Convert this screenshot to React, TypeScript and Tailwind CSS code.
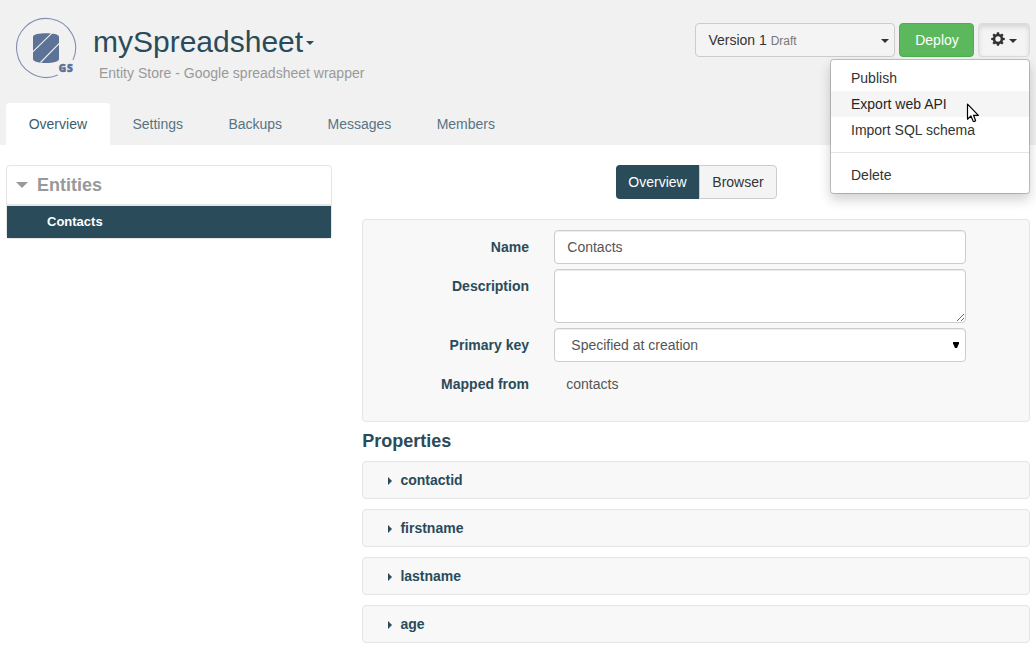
import React from 'react';

const tabs = ['Overview', 'Settings', 'Backups', 'Messages', 'Members'];
const properties = ['contactid', 'firstname', 'lastname', 'age'];
const toothAngles = [0, 45, 90, 135];

function Caret({ className = '' }: { className?: string }) {
  return (
    <span
      className={`inline-block h-0 w-0 shrink-0 border-x-4 border-t-4 border-x-transparent border-t-current ${className}`}
    />
  );
}

function Logo() {
  return (
    <svg width="62" height="62" viewBox="0 0 62 62" className="shrink-0">
      <path d="M58 43 A29.5 29.5 0 1 0 42.8 58" fill="none" stroke="#8090b4" strokeWidth="1.1" />
      <path d="M18 19.5 C18 15 44 15 44 19.5 V42 C44 47.3 18 47.3 18 42 Z" fill="#5c7296" />
      <path d="M17.5 35.2 L37.2 15.8 M25.5 45.5 L44.5 26.2" stroke="#f1f1f1" strokeWidth="1.1" />
      <text
        x="43.8"
        y="55.2"
        fontFamily="Open Sans, sans-serif"
        fontWeight="800"
        fontSize="10"
        fill="#5c7296"
        stroke="#5c7296"
        strokeWidth="0.5"
        letterSpacing="0.9"
      >
        GS
      </text>
    </svg>
  );
}

function Gear() {
  return (
    <svg width="14" height="14" viewBox="0 0 14 14" fill="none" stroke="currentColor">
      <circle cx="7" cy="7" r="3.9" strokeWidth="2.5" />
      {toothAngles.map((angle) => (
        <path
          key={angle}
          d="M5.9 0.2 H8.1 L8.5 2.8 H5.5 Z M5.9 13.8 H8.1 L8.5 11.2 H5.5 Z"
          fill="currentColor"
          stroke="none"
          transform={`rotate(${angle} 7 7)`}
        />
      ))}
    </svg>
  );
}

function Cursor() {
  return (
    <svg width="14" height="21" viewBox="0 0 14 21" className="absolute left-[135px] top-[43px]">
      <path
        d="M1.5 1.2 V16.2 L4.9 13 L7.2 18.2 Q8.5 19.2 9.6 17.4 L7.5 12.3 H12.4 Z"
        fill="#fff"
        stroke="#000"
        strokeWidth="1.2"
        strokeLinejoin="round"
      />
    </svg>
  );
}

function ActionsMenu() {
  return (
    <div className="absolute right-0 top-[36px] z-10 w-[200px] rounded-[4px] border border-black/20 bg-white bg-clip-padding py-[5px] text-[#333] shadow-[0_6px_12px_rgba(0,0,0,0.175)]">
      <div className="px-5 py-[3px]">Publish</div>
      <div className="bg-[#f5f5f5] px-5 py-[3px] text-[#262626]">Export web API</div>
      <div className="px-5 py-[3px]">Import SQL schema</div>
      <div className="my-[9px] h-px bg-[#e5e5e5]" />
      <div className="px-5 py-[3px]">Delete</div>
      <Cursor />
    </div>
  );
}

function Row({ label, children }: { label: string; children: React.ReactNode }) {
  return (
    <div className="flex items-start">
      <div className="w-[166px] pt-[7px] text-right font-bold text-[#294b5a]">{label}</div>
      <div className="ml-[25px] w-[412px]">{children}</div>
    </div>
  );
}

export default function App() {
  return (
    <div className="h-[651px] w-[1036px] overflow-hidden bg-white font-['Liberation_Sans',Arial,sans-serif] text-[14px] leading-[20px] text-[#555]">
      <header className="flex h-[145px] flex-col justify-between bg-[#f1f1f1]">
        <div className="flex items-start justify-between pl-[15px] pr-[6px]">
          <div className="flex pt-[17px]">
            <Logo />
            <div className="pl-4 pt-[8px]">
              <h1 className="flex items-center text-[30px] leading-[33px] text-[#294b5a]">
                mySpreadsheet
                <Caret className="ml-[3px] mt-[3px]" />
              </h1>
              <p className="pl-[6px] pt-[5px] text-[#999]">Entity Store - Google spreadsheet wrapper</p>
            </div>
          </div>
          <div className="flex gap-1 pt-[23px] text-[#333]">
            <button className="flex h-[34px] w-[200px] items-center justify-between rounded-[4px] border border-[#ccc] bg-[#f4f4f4] pl-[12.4px] pr-[5px]">
              <span>
                Version 1 <span className="text-[12px] text-[#777]">Draft</span>
              </span>
              <Caret className="mt-[2px]" />
            </button>
            <button className="h-[34px] w-[75px] rounded-[4px] border border-[#4cae4c] bg-[#5cb85c] pl-[1px] text-white">
              Deploy
            </button>
            <div className="relative">
              <button className="flex h-[34px] w-[52px] items-center rounded-[4px] border border-[#dbdbdb] bg-[#f4f4f4] pl-3 shadow-[inset_0_3px_5px_rgba(0,0,0,0.125)]">
                <span className="-mt-[2px]">
                  <Gear />
                </span>
                <Caret className="ml-1 mt-[2px]" />
              </button>
              <ActionsMenu />
            </div>
          </div>
        </div>
        <nav className="flex pl-[6px]">
          {tabs.map((tab, i) => (
            <a
              key={tab}
              className={`h-[42px] rounded-t-[4px] px-[22.7px] pt-[11px] ${i === 0 ? 'bg-white text-[#3b5e70]' : 'text-[#587483]'}`}
            >
              {tab}
            </a>
          ))}
        </nav>
      </header>

      <div className="flex items-start gap-[30px] px-[6px] pt-5">
        <aside className="w-[326px] rounded-[4px] border border-[#e5e5e5]">
          <div className="flex h-[40px] items-center border-b-2 border-[#e5e5e5] pl-[9px] text-[18px] font-bold text-[#999]">
            <span className="mr-[9px] inline-block border-x-6 border-t-6 border-x-transparent border-t-current" />
            Entities
          </div>
          <div className="h-[32px] bg-[#294b5a] pl-10 pt-[6px] text-[13px] font-bold text-white">Contacts</div>
        </aside>

        <main className="w-[668px]">
          <div className="flex h-[34px] justify-center">
            <button className="w-[83px] rounded-l-[4px] bg-[#294b5a] pl-[1px] text-white">Overview</button>
            <button className="w-[78px] rounded-r-[4px] border border-[#ccc] bg-[#f4f4f4] pl-[1px] text-[#333]">
              Browser
            </button>
          </div>

          <section className="mt-5 flex h-[203px] flex-col gap-[5px] rounded-[4px] border border-[#e5e5e5] bg-[#f8f8f8] pt-[10px]">
            <Row label="Name">
              <div className="h-[34px] rounded-[4px] border border-[#ccc] bg-white px-[12.3px] py-[6px] shadow-[inset_0_1px_1px_rgba(0,0,0,0.075)]">
                Contacts
              </div>
            </Row>
            <Row label="Description">
              <textarea className="block h-[54px] w-full resize rounded-[4px] border border-[#ccc] bg-white px-3 py-[6px] shadow-[inset_0_1px_1px_rgba(0,0,0,0.075)]" />
            </Row>
            <Row label="Primary key">
              <div className="flex h-[34px] items-center justify-between rounded-[4px] border border-[#ccc] bg-white pl-[16.3px] pr-[6px] shadow-[inset_0_1px_1px_rgba(0,0,0,0.075)]">
                Specified at creation
                <svg width="6" height="6" viewBox="0 0 6 6" className="-mt-px">
                  <path d="M0 0 H6 V1.5 L4 6 H2 L0 1.5 Z" fill="#000" />
                </svg>
              </div>
            </Row>
            <Row label="Mapped from">
              <div className="pl-[12.3px] pt-[7px]">contacts</div>
            </Row>
          </section>

          <h2 className="mt-[9px] pl-[0.3px] text-[18px] font-bold leading-[20px] text-[#294b5a]">Properties</h2>
          <div className="mt-[10px] flex flex-col gap-[10px]">
            {properties.map((name) => (
              <div
                key={name}
                className="flex h-[38px] items-center rounded-[4px] border border-[#e5e5e5] bg-[#f8f8f8] pl-[25px] font-bold text-[#294b5a]"
              >
                <span className="mr-[8.4px] mt-[2px] inline-block border-y-4 border-l-4 border-y-transparent border-l-current" />
                {name}
              </div>
            ))}
          </div>
        </main>
      </div>
    </div>
  );
}
